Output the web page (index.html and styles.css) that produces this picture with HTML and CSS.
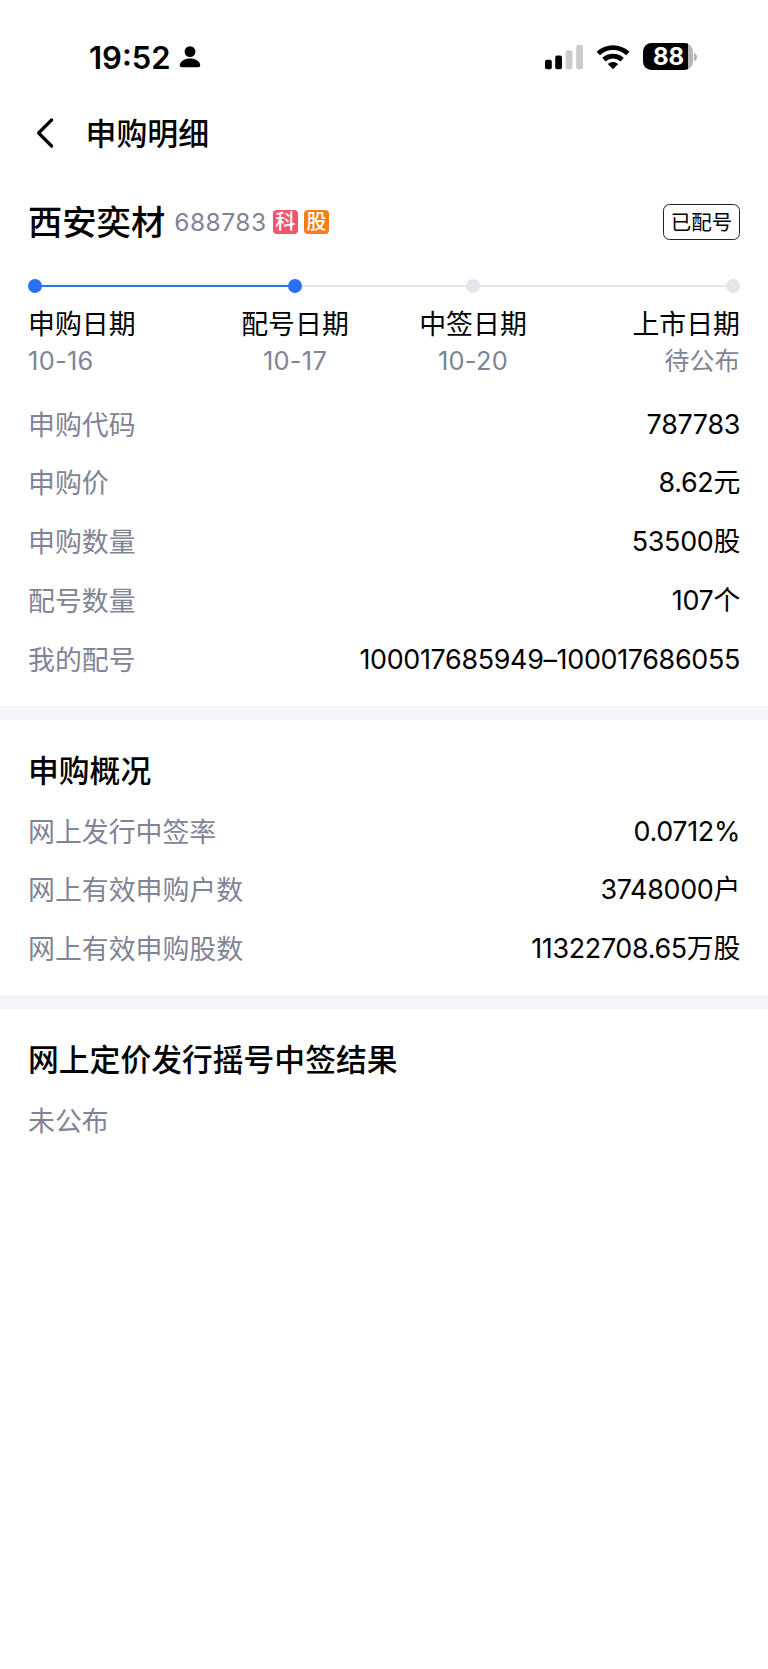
FILE: index.html
```html
<!DOCTYPE html>
<html lang="zh-CN">
<head>
<meta charset="utf-8">
<title>申购明细</title>
<link rel="stylesheet" href="styles.css">
</head>
<body>
<header class="status-bar">
  <div class="clock">
    <span class="time">19:52</span>
    <svg class="person" width="22" height="24" viewBox="0 0 22 24"><circle cx="11" cy="6.6" r="5.4"/><path d="M3 22.3C1.200 22.300.6 21.200.8 19.800 1.600 16.200 5.600 13.500 11 13.500s9.400 2.700 10.200 6.300c.2 1.400-.4 2.500-2.200 2.500z"/></svg>
  </div>
  <div class="indicators">
    <svg width="40" height="26" viewBox="0 0 40 26"><rect x="1" y="15.700" width="6.800" height="9.600" rx="2"/><rect x="11.200" y="11.500" width="6.800" height="13.800" rx="2"/><g fill="#cbcbcb"><rect x="21.700" y="6.300" width="6.800" height="19" rx="2"/><rect x="32.200" y="1" width="6.800" height="24.300" rx="2"/></g></svg>
    <svg class="wifi" width="34" height="26" viewBox="0 0 34 26"><g fill="none" stroke="#000" stroke-width="4.900"><path d="M2.200 9.500a21.500 21.500 0 0 1 29.600 0"/><path d="M7.900 15.600a13.600 13.600 0 0 1 18.200 0"/></g><path d="M17 25.200l-5.200-5.300a8 8 0 0 1 10.400 0z"/></svg>
    <div class="battery"><span class="level">88</span></div>
    <svg class="nub" width="4" height="10" viewBox="0 0 4 10"><path d="M0 .7C4 2 4 8 0 9.300z" fill="#b5b5b5"/></svg>
  </div>
</header>
<nav class="nav">
  <svg class="back" width="18" height="32" viewBox="0 0 18 32"><path d="M15.600 3L2.600 16l13 13" fill="none" stroke="#000" stroke-width="3.200" stroke-linecap="round" stroke-linejoin="round"/></svg>
  <h1 class="nav-title">申购明细</h1>
</nav>
<main>
  <section class="section detail">
    <div class="stock">
      <h2 class="name">西安奕材</h2>
      <span class="code">688783</span>
      <span class="tag tag-pink">科</span>
      <span class="tag tag-orange">股</span>
      <span class="badge">已配号</span>
    </div>
    <ol class="timeline">
      <li class="step done first"><i class="dot"></i><span class="label">申购日期</span><span class="date">10-16</span></li>
      <li class="step done"><i class="dot"></i><span class="label">配号日期</span><span class="date">10-17</span></li>
      <li class="step"><i class="dot"></i><span class="label">中签日期</span><span class="date">10-20</span></li>
      <li class="step last"><i class="dot"></i><span class="label">上市日期</span><span class="date pending">待公布</span></li>
    </ol>
    <dl class="rows">
      <div class="row"><dt>申购代码</dt><dd>787783</dd></div>
      <div class="row"><dt>申购价</dt><dd>8.62元</dd></div>
      <div class="row"><dt>申购数量</dt><dd>53500股</dd></div>
      <div class="row"><dt>配号数量</dt><dd>107个</dd></div>
      <div class="row"><dt>我的配号</dt><dd>100017685949–100017686055</dd></div>
    </dl>
  </section>
  <section class="section overview">
    <h2 class="heading">申购概况</h2>
    <dl class="rows">
      <div class="row"><dt>网上发行中签率</dt><dd>0.0712%</dd></div>
      <div class="row"><dt>网上有效申购户数</dt><dd>3748000户</dd></div>
      <div class="row"><dt>网上有效申购股数</dt><dd>11322708.65万股</dd></div>
    </dl>
  </section>
  <section class="section result">
    <h2 class="heading">网上定价发行摇号中签结果</h2>
    <p class="row empty">未公布</p>
  </section>
</main>
</body>
</html>
```
FILE: styles.css
```css
* { box-sizing: border-box; margin: 0; padding: 0; }
body {
  min-height: 1669px;
  background: #fff;
  color: #000;
  font-family: Inter, "Noto Sans CJK SC", sans-serif;
  font-size: 26.9px;
}
svg { display: block; }
h1, h2 { font-weight: 500; }

.status-bar {
  display: flex;
  justify-content: space-between;
  height: 96px;
  padding: 43px 70px 0 89px;
}
.clock, .indicators { display: flex; align-items: center; height: 27px; }
.time { padding-top: 1px; font-size: 31px; font-weight: 600; line-height: 27px; }
.person { margin-left: 8px; }
.wifi { margin-left: 12px; }
.battery {
  width: 50px;
  height: 27px;
  margin-left: 13px;
  border-radius: 8.500px;
  background: linear-gradient(to right, #000 44.500px, #b5b5b5 44.500px);
}
.level {
  display: block;
  padding-left: 2px;
  color: #fff;
  font-size: 24px;
  font-weight: 700;
  line-height: 27px;
  text-align: center;
}
.nub { margin-left: 1.500px; }

.nav { display: flex; align-items: center; height: 74px; padding-left: 35.500px; }
.back { margin-right: 32px; }
.nav-title { padding-top: 1px; font-size: 30.900px; line-height: 40px; }

.section { padding: 0 28px; }
.section + .section { border-top: 14px solid #f3f5fa; }
.detail { height: 536px; }
.overview { height: 289px; }

.stock { display: flex; align-items: center; height: 104px; }
.name { padding-top: 2px; font-size: 34.300px; line-height: 48px; }
.code {
  margin-left: 9px;
  color: #7f8496;
  font-size: 24.600px;
  letter-spacing: 0.450px;
  line-height: 32px;
}
.tag {
  width: 24.600px;
  height: 24.600px;
  margin-left: 6.500px;
  border-radius: 4px;
  color: #fff;
  font-size: 20px;
  font-weight: 500;
  line-height: 25.500px;
  text-align: center;
}
.tag-pink { background: #f2566f; }
.tag-orange { background: #f97d14; }
.badge {
  width: 77px;
  height: 35.500px;
  margin-left: auto;
  border: 1px solid #222;
  border-radius: 6.500px;
  font-size: 20.500px;
  line-height: 35px;
  text-align: center;
}

.timeline {
  display: grid;
  grid-template-columns: repeat(4, 178px);
  height: 120.600px;
  padding-top: 5px;
  list-style: none;
  background:
    linear-gradient(#2970f2, #2970f2) 7px 11px / 260px 2px no-repeat,
    linear-gradient(#e5e6eb, #e5e6eb) 7px 11px / 698px 2px no-repeat;
}
.step { display: flex; flex-direction: column; align-items: center; }
.first { align-items: flex-start; }
.last { align-items: flex-end; }
.dot { width: 14px; height: 14px; border-radius: 50%; background: #e5e6eb; }
.done .dot { background: #2970f2; }
.label { margin-top: 12.500px; line-height: 37.600px; }
.date {
  color: #7f8496;
  font-size: 25.400px;
  letter-spacing: 0.300px;
  line-height: 36px;
}
.pending { font-size: 24.900px; }

.row {
  display: flex;
  justify-content: space-between;
  height: 58.800px;
  line-height: 58.800px;
  white-space: nowrap;
}
dt, .empty { padding-top: 1px; color: #7f8496; }
dd { letter-spacing: -0.320px; }
.heading { height: 81.600px; padding-top: 21px; font-size: 30.800px; line-height: 60px; }
```
